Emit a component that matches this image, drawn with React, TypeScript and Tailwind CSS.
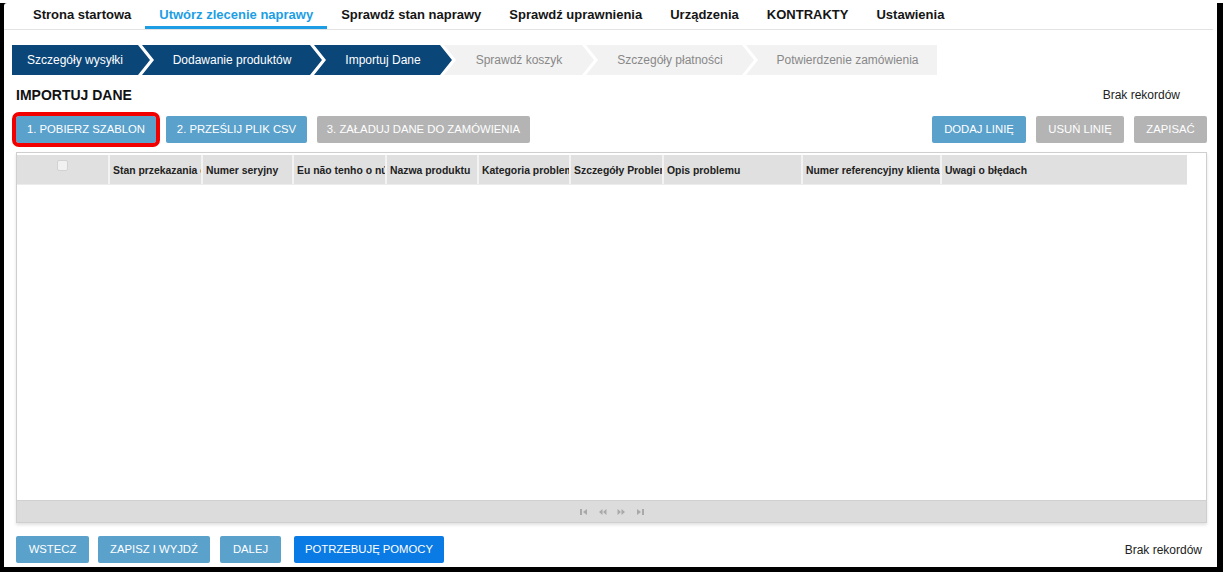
import React from "react";

const nav = [
  "Strona startowa",
  "Utwórz zlecenie naprawy",
  "Sprawdź stan naprawy",
  "Sprawdź uprawnienia",
  "Urządzenia",
  "KONTRAKTY",
  "Ustawienia",
];

const steps: { label: string; w: number; done: boolean }[] = [
  { label: "Szczegóły wysyłki", w: 138, done: true },
  { label: "Dodawanie produktów", w: 180, done: true },
  { label: "Importuj Dane", w: 138, done: true },
  { label: "Sprawdź koszyk", w: 150, done: false },
  { label: "Szczegóły płatności", w: 168, done: false },
  { label: "Potwierdzenie zamówienia", w: 191, done: false },
];

const cols: { label: string; w: number }[] = [
  { label: "Stan przekazania do serwisu", w: 93 },
  { label: "Numer seryjny", w: 91 },
  { label: "Eu não tenho o número de série", w: 93 },
  { label: "Nazwa produktu", w: 92 },
  { label: "Kategoria problemu", w: 92 },
  { label: "Szczegóły Problemu", w: 93 },
  { label: "Opis problemu", w: 139 },
  { label: "Numer referencyjny klienta", w: 139 },
  { label: "Uwagi o błędach", w: 245 },
];

function Btn({
  children,
  w,
  tone = "blue",
  className = "",
}: {
  children: React.ReactNode;
  w: number;
  tone?: "blue" | "gray" | "bright";
  className?: string;
}) {
  const bg =
    tone === "blue" ? "bg-[#5aa1cb]" : tone === "gray" ? "bg-[#b4b4b4]" : "bg-[#0a7ae4]";
  return (
    <button
      style={{ width: w }}
      className={`h-[27px] shrink-0 rounded-[2px] text-[11.3px] text-white uppercase ${bg} ${className}`}
    >
      {children}
    </button>
  );
}

// chevron shape for the breadcrumb steps
function stepShape(first: boolean, last: boolean) {
  if (first) return "[clip-path:polygon(0_0,calc(100%-12px)_0,100%_50%,calc(100%-12px)_100%,0_100%)]";
  if (last) return "[clip-path:polygon(0_0,100%_0,100%_100%,0_100%,12px_50%)]";
  return "[clip-path:polygon(0_0,calc(100%-12px)_0,100%_50%,calc(100%-12px)_100%,0_100%,12px_50%)]";
}

function PagerIcon({ kind }: { kind: "first" | "prev" | "next" | "last" }) {
  return (
    <svg width="9" height="8" viewBox="0 0 9 8" className="fill-[#a9a9a9]">
      {kind === "first" && (
        <>
          <rect x="1" y="1" width="2" height="6" />
          <path d="M8 1 L4 4 L8 7 Z" />
        </>
      )}
      {kind === "prev" && (
        <>
          <path d="M4.5 1 L1 4 L4.5 7 Z" />
          <path d="M8.5 1 L5 4 L8.5 7 Z" />
        </>
      )}
      {kind === "next" && (
        <>
          <path d="M0.5 1 L4 4 L0.5 7 Z" />
          <path d="M4.5 1 L8 4 L4.5 7 Z" />
        </>
      )}
      {kind === "last" && (
        <>
          <path d="M1 1 L5 4 L1 7 Z" />
          <rect x="6" y="1" width="2" height="6" />
        </>
      )}
    </svg>
  );
}

export default function App() {
  return (
    <div className="w-[1223px] h-[572px] bg-black font-['Liberation_Sans',Arial,sans-serif] text-[#222]">
      <div className="ml-[4px] mt-[3px] w-[1213px] h-[564px] bg-white rounded-tl-[3px] flex flex-col">
        {/* top navigation */}
        <div className="h-[27px] border-b border-[#e3e3e3] flex items-start pl-[15px] mr-[4px]">
          {nav.map((n, i) => (
            <div
              key={n}
              className={`h-[26px] px-[14px] pt-[2px] text-[13px] font-bold whitespace-nowrap ${
                i === 1 ? "text-[#1d9ee4] border-b-[3px] border-[#1d9ee4]" : "text-[#151515]"
              }`}
            >
              {n}
            </div>
          ))}
        </div>

        {/* breadcrumb steps */}
        <div className="mt-[15px] ml-[8px] flex h-[30px]">
          {steps.map((s, i) => (
            <div
              key={s.label}
              style={{ width: s.w }}
              className={`h-[30px] shrink-0 flex items-center justify-center text-[12px] ${
                i > 0 ? "-ml-[8px] pl-[12px]" : ""
              } ${i < steps.length - 1 ? "pr-[12px]" : ""} ${
                s.done ? "bg-[#0a4678] text-white" : "bg-[#f2f2f2] text-[#888]"
              } ${stepShape(i === 0, i === steps.length - 1)}`}
            >
              {s.label}
            </div>
          ))}
        </div>

        {/* title */}
        <div className="mt-[12px] h-[16px] flex items-center justify-between pl-[12px] pr-[37px]">
          <div className="text-[14px] font-bold text-[#111]">IMPORTUJ DANE</div>
          <div className="text-[12px] text-[#222]">Brak rekordów</div>
        </div>

        {/* action buttons */}
        <div className="mt-[13px] flex items-center pl-[12px] pr-[10px]">
          <div className="flex gap-[10px]">
            <Btn w={140} className="outline-4 outline-solid outline-[#f20000] outline-offset-[0px] rounded-[3px]">
              1. Pobierz szablon
            </Btn>
            <Btn w={141}>2. Prześlij plik CSV</Btn>
            <Btn w={213} tone="gray">
              3. Załaduj dane do zamówienia
            </Btn>
          </div>
          <div className="ml-auto flex gap-[10px]">
            <Btn w={94}>Dodaj linię</Btn>
            <Btn w={88} tone="gray">
              Usuń linię
            </Btn>
            <Btn w={73} tone="gray">
              Zapisać
            </Btn>
          </div>
        </div>

        {/* grid */}
        <div className="mt-[9px] ml-[12px] w-[1191px] h-[371px] border border-[#cfcfcf] shadow-[0_2px_3px_rgba(0,0,0,0.12)] flex flex-col">
          <div className="pt-[2px] flex-1 flex flex-col">
            <div className="w-[1170px] h-[30px] flex bg-[#e0e0e0] border-b border-[#ececec]">
              <div className="w-[93px] shrink-0 border-r-2 border-[#f3f3f3] flex items-start justify-center pt-[5px]">
                <div className="w-[11px] h-[11px] rounded-[2px] border border-[#d2d2d2] bg-[#f1f1f1]" />
              </div>
              {cols.map((c, i) => (
                <div
                  key={c.label}
                  style={{ width: c.w }}
                  className={`shrink-0 overflow-hidden whitespace-nowrap pl-[3px] pt-[8px] text-[10.4px] font-bold text-[#222] ${
                    i < cols.length - 1 ? "border-r-2 border-[#f3f3f3]" : ""
                  }`}
                >
                  {c.label}
                </div>
              ))}
            </div>
          </div>
          <div className="h-[22px] bg-[#dcdcdc] border-t border-[#d0d0d0] flex items-center justify-center gap-[10px]">
            <PagerIcon kind="first" />
            <PagerIcon kind="prev" />
            <PagerIcon kind="next" />
            <PagerIcon kind="last" />
          </div>
        </div>

        {/* bottom buttons */}
        <div className="mt-[13px] flex items-center pl-[12px] pr-[15px]">
          <Btn w={73} className="h-[26px]">
            Wstecz
          </Btn>
          <Btn w={112} className="ml-[9px] h-[26px]">
            Zapisz i wyjdź
          </Btn>
          <Btn w={61} className="ml-[10px] h-[26px]">
            Dalej
          </Btn>
          <Btn w={150} tone="bright" className="ml-[13px] h-[26px]">
            Potrzebuję pomocy
          </Btn>
          <div className="ml-auto text-[12px] text-[#222]">Brak rekordów</div>
        </div>
      </div>
    </div>
  );
}
